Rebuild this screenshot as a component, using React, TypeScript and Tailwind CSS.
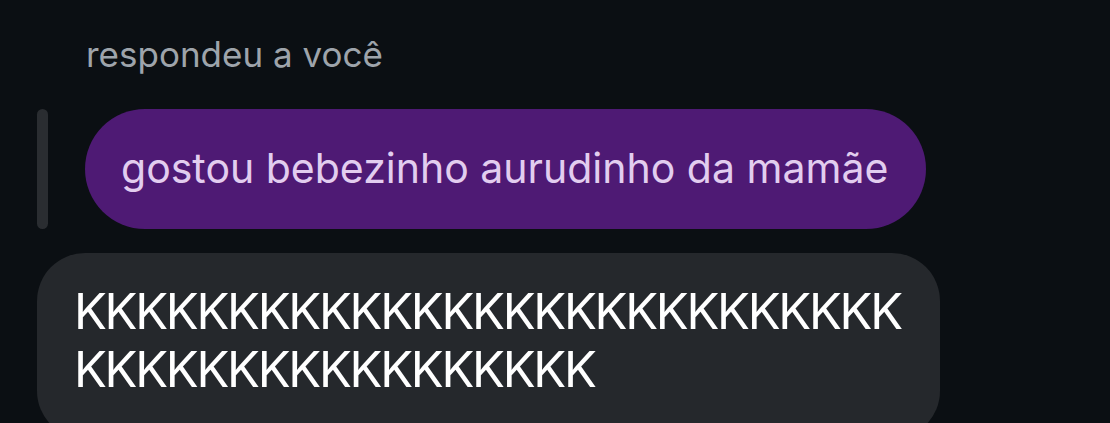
export default function App() {
  return (
    <div className="h-[423px] w-[1110px] overflow-hidden bg-[#0b0f13] font-['Inter',sans-serif]">
      <div className="pl-[86px] pt-[34px] text-[35px] leading-[40px] text-[#9ea4ab]">
        respondeu a você
      </div>

      {/* mensagem respondida */}
      <div className="mt-[35px] flex items-stretch gap-[37px] pl-[37px]">
        <div className="w-[11px] rounded-full bg-[#2a2d31]" />
        <div className="flex h-[120px] items-center whitespace-nowrap rounded-full bg-[#4e1a74] pl-[36px] pr-[38px] text-[41px] text-[#e2cdef]">
          gostou bebezinho aurudinho da mamãe
        </div>
      </div>

      {/* resposta */}
      <div className="mt-[24px] pl-[37px]">
        <div className="w-[903px] whitespace-nowrap rounded-[48px] bg-[#25282c] px-[37px] pt-[30px] pb-[40px] text-[49px] leading-[58px] tracking-[-2.3px] text-white">
          KKKKKKKKKKKKKKKKKKKKKKKKKKK
          <br />
          KKKKKKKKKKKKKKKKK
        </div>
      </div>
    </div>
  );
}
